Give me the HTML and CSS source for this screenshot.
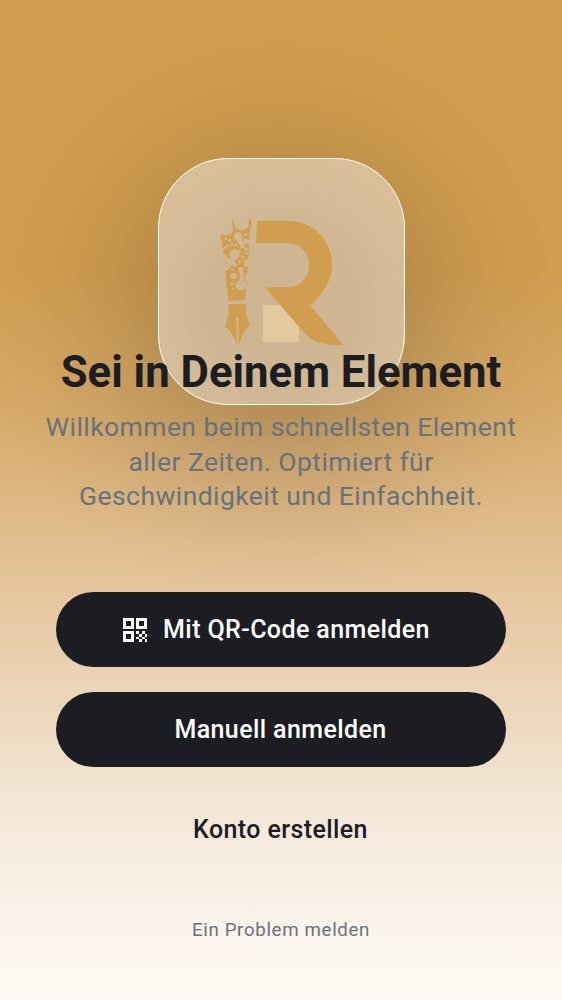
FILE: index.html
```html
<!DOCTYPE html>
<html lang="de">
<head>
<meta charset="utf-8">
<title>Anmelden</title>
<link rel="stylesheet" href="styles.css">
</head>
<body>
<main class="screen">
  <div class="card">
    <svg class="logo" viewBox="0 0 450 465" aria-hidden="true">
      <rect class="tile" x="174" y="300" width="108" height="111"/>
      <g class="ink">
        <path d="M156 47H248C322 47 381 103 381 181C381 229 350 270 316 302L415 419C365 423 323 412 298 384L180 247H248C286 247 312 218 312 181C312 143 285 114 248 114H153Z"/>
        <path d="M81 45L87 48C84 62 95 75 109 75C123 75 134 66 131 54V43Q134 39 138 43V58L133 103Q124 111 132 119L130 158Q118 165 117 175Q119 184 129 187L128 200Q118 207 118 216Q119 225 126 230L123 252L122 286L70 287L60 196L65 195Q75 193 76 184Q77 175 58 179V175Q67 174 67 166Q68 158 66 152Q55 148 53 140V136Q59 135 58 130Q52 127 51 122L52 107L48 105V87L58 90C75 94 90 82 83 67Z"/>
        <path d="M71 297H122Q121 335 135 360Q110 382 102 420H100V348A5 5 0 1 0 95 348V420Q86 385 60 362Q72 340 71 297Z"/>
      </g>
      <g class="cell">
        <circle cx="99" cy="94" r="13"/><path d="M96 106Q102 121 108 124L119 115Q110 111 112 98Z"/><circle cx="113" cy="124" r="7"/>
        <circle cx="123" cy="109" r="8"/><circle cx="122" cy="89" r="4"/><circle cx="131" cy="86" r="2.5"/><circle cx="131" cy="94" r="2.5"/>
        <circle cx="62" cy="101" r="4"/><circle cx="74" cy="106" r="5"/><circle cx="81" cy="119" r="4"/><circle cx="92" cy="119" r="4"/><circle cx="69" cy="121" r="3.5"/><circle cx="61" cy="127" r="3.5"/><circle cx="72" cy="129" r="2.5"/>
        <circle cx="89" cy="147" r="15"/><path d="M75 153Q80 163 72 172L89 173Q88 164 99 158Z"/><circle cx="76" cy="170" r="12"/><circle cx="64" cy="185" r="8"/>
        <circle cx="105" cy="135" r="3.5"/><circle cx="124" cy="133" r="5"/><circle cx="124" cy="145" r="4"/><circle cx="113" cy="156" r="5"/><circle cx="125" cy="174" r="10"/><circle cx="104" cy="169" r="3.5"/>
        <circle cx="90" cy="180" r="6"/><circle cx="82" cy="195" r="4"/><circle cx="86" cy="213" r="10"/><circle cx="107" cy="194" r="8"/><path d="M103 202Q109 216 101 226H118Q113 213 115 200Z"/><circle cx="107" cy="241" r="15"/><path d="M111 229L124 226V252L112 254Z"/>
        <circle cx="81" cy="237" r="4.5"/><circle cx="84" cy="251" r="3"/><circle cx="126" cy="214" r="8"/>
      </g>
    </svg>
  </div>
  <h1 class="title">Sei in Deinem Element</h1>
  <p class="intro">Willkommen beim schnellsten Element aller Zeiten. Optimiert für Geschwindigkeit und Einfachheit.</p>
  <div class="actions">
    <button class="button with-icon">
      <svg class="qr" viewBox="0 0 24 24" aria-hidden="true">
        <path fill-rule="evenodd" d="M0 0H11V11H0ZM3 3V8H8V3ZM13 0H24V11H13ZM16 3V8H21V3ZM0 13H11V24H0ZM3 16V21H8V16Z"/>
        <path d="M13 13h3v3h-3zM19 13h3v3h-3zM16 16h3v3h-3zM22 16h2v3h-2zM13 19h3v2h-3zM19 19h3v2h-3zM16 21h3v3h-3zM22 21h2v3h-2z"/>
      </svg>
      <span>Mit QR-Code anmelden</span>
    </button>
    <button class="button">Manuell anmelden</button>
    <button class="button plain">Konto erstellen</button>
  </div>
  <a class="report">Ein Problem melden</a>
</main>
</body>
</html>
```
FILE: styles.css
```css
* { box-sizing: border-box; }
body { margin: 0; font-family: Roboto, sans-serif; color: #1c1d23; }
.screen {
  display: flex;
  flex-direction: column;
  align-items: center;
  height: 1000px;
  padding-top: 158px;
  overflow: hidden;
  background:
    radial-gradient(circle 300px at 281px 312px, rgba(0, 0, 0, .19) 0%, rgba(0, 0, 0, .155) 30%, rgba(0, 0, 0, .122) 41%, rgba(0, 0, 0, .083) 53%, rgba(0, 0, 0, .043) 68%, rgba(0, 0, 0, .014) 84%, rgba(0, 0, 0, 0) 100%),
    linear-gradient(#d19e50 0%, #d19e50 27%, #d6a968 41%, #dfba88 52%, #e6c79f 60%, #ebd3b5 68%, #f3e7d7 81%, #faf3ea 92%, #fdfaf5 100%);
}
.card {
  flex: none;
  width: 247px;
  height: 247px;
  padding: 46px;
  border: 1px solid #fff;
  border-radius: 70px;
  background: radial-gradient(circle at 50% 60%, #cdb591 0%, #cfb793 40%, #d4bc98 65%, #dcc299 100%);
}
.logo { display: block; width: 150px; height: 155px; }
.ink { fill: #d19e50; }
.cell { fill: #cfb792; }
.tile { fill: #e5c99f; }
.title {
  margin: -59px 0 0;
  font-size: 43.7px;
  line-height: 52px;
  font-weight: 700;
  white-space: nowrap;
}
.intro {
  width: 490px;
  margin: 12.4px 0 0;
  font-size: 26.5px;
  line-height: 34.4px;
  letter-spacing: .43px;
  text-align: center;
  color: #68727c;
}
.actions { display: flex; flex-direction: column; gap: 25px; margin-top: 78.4px; }
.button {
  display: flex;
  align-items: center;
  justify-content: center;
  gap: 16px;
  width: 450px;
  height: 75px;
  padding: 0 1px 0 0;
  border: 0;
  border-radius: 38px;
  background: #1c1d23;
  color: #fff;
  font: 500 25px/30px Roboto, sans-serif;
  letter-spacing: .4px;
}
.with-icon { padding-right: 9px; }
.plain { background: none; color: #1c1d23; }
.qr { width: 24px; height: 24px; fill: #fff; }
.report { margin-top: 51px; font-size: 18.7px; line-height: 24px; letter-spacing: .66px; color: #68727c; }
```
